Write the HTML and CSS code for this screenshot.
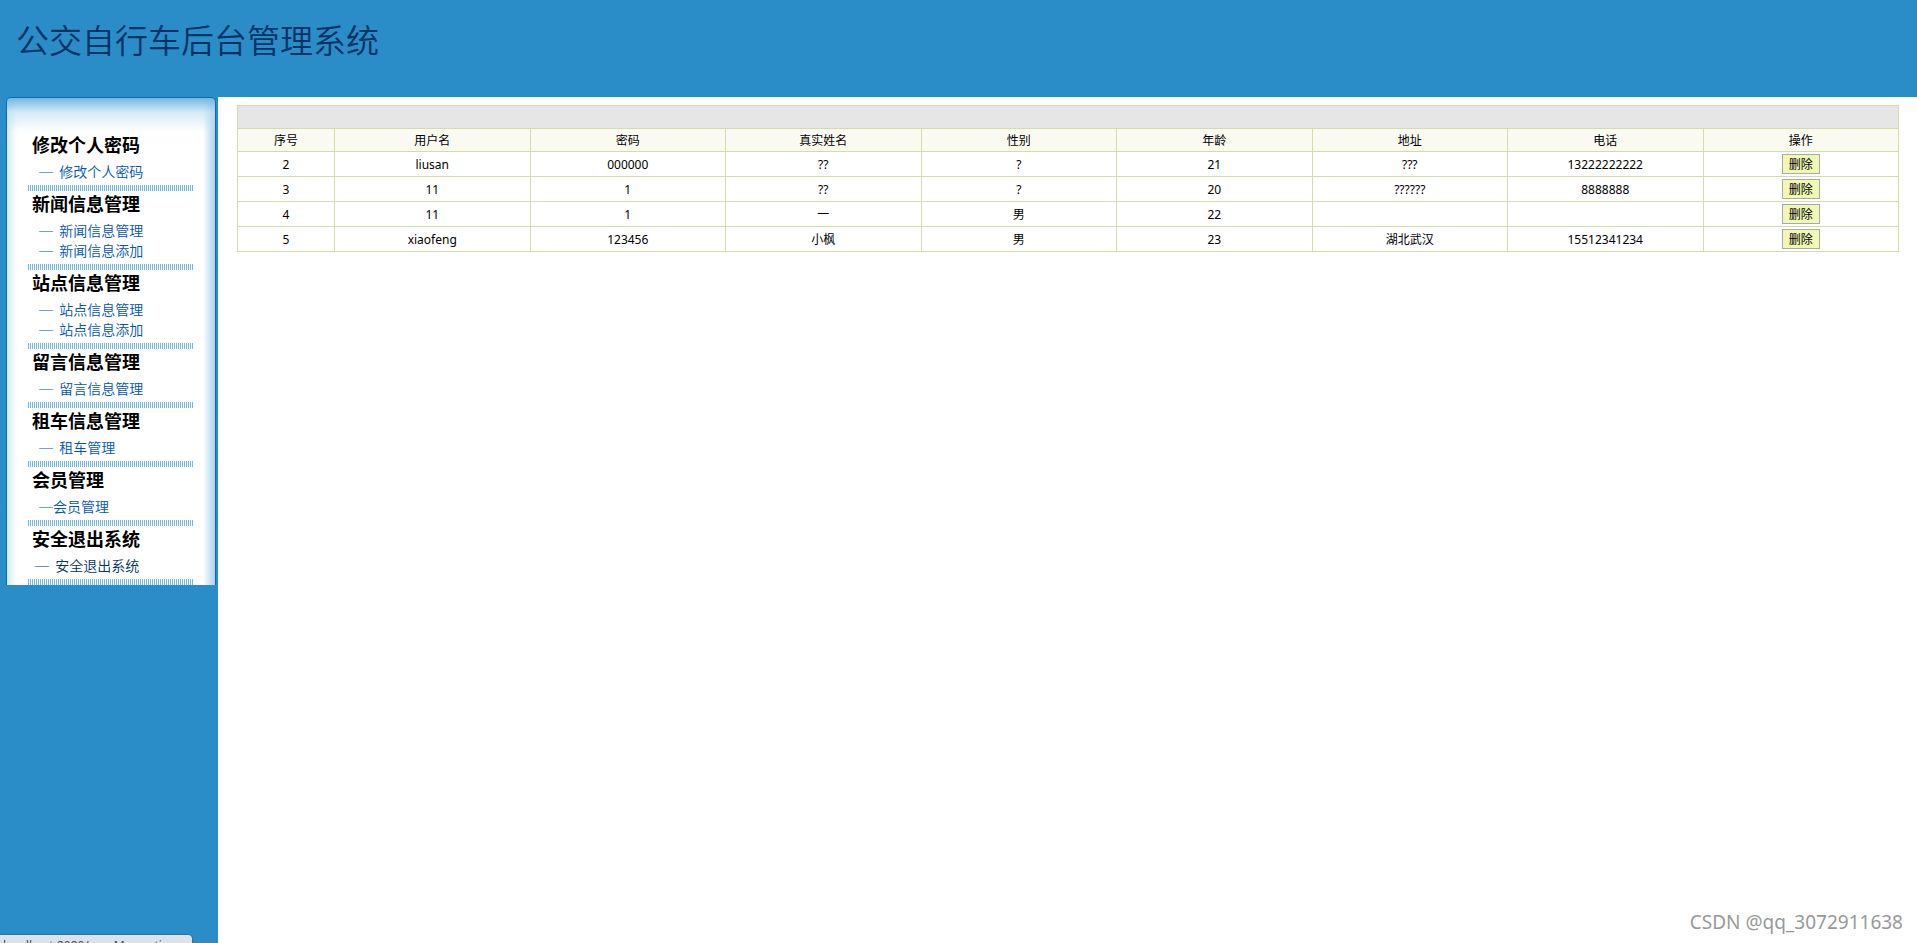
FILE: index.html
```html
<!DOCTYPE html>
<html lang="zh-CN">
<head>
  <meta charset="UTF-8">
  <meta name="viewport" content="width=device-width, initial-scale=1.0">
  <title>公交自行车后台管理系统</title>
  <link rel="stylesheet" href="styles.css">
</head>
<body>
  <header class="top">
    <h1>公交自行车后台管理系统</h1>
  </header>

  <div class="wrap">
    <!-- left menu -->
    <aside class="left">
      <nav class="menu">
        <div class="group">
          <h2>修改个人密码</h2>
          <a href="#">─&nbsp;&nbsp;修改个人密码</a>
        </div>
        <div class="group">
          <h2>新闻信息管理</h2>
          <a href="#">─&nbsp;&nbsp;新闻信息管理</a>
          <a href="#">─&nbsp;&nbsp;新闻信息添加</a>
        </div>
        <div class="group">
          <h2>站点信息管理</h2>
          <a href="#">─&nbsp;&nbsp;站点信息管理</a>
          <a href="#">─&nbsp;&nbsp;站点信息添加</a>
        </div>
        <div class="group">
          <h2>留言信息管理</h2>
          <a href="#">─&nbsp;&nbsp;留言信息管理</a>
        </div>
        <div class="group">
          <h2>租车信息管理</h2>
          <a href="#">─&nbsp;&nbsp;租车管理</a>
        </div>
        <div class="group">
          <h2>会员管理</h2>
          <a href="#">─会员管理</a>
        </div>
        <div class="group">
          <h2>安全退出系统</h2>
          <a href="#" class="exit">─&nbsp;&nbsp;安全退出系统</a>
        </div>
      </nav>
    </aside>

    <!-- user list -->
    <main class="main">
      <table class="list">
        <colgroup>
          <col class="no">
          <col span="8">
        </colgroup>
        <thead>
          <tr class="bar"><td colspan="9"></td></tr>
          <tr class="head">
            <th>序号</th>
            <th>用户名</th>
            <th>密码</th>
            <th>真实姓名</th>
            <th>性别</th>
            <th>年龄</th>
            <th>地址</th>
            <th>电话</th>
            <th>操作</th>
          </tr>
        </thead>
        <tbody>
          <tr>
            <td>2</td><td>liusan</td><td>000000</td><td>??</td><td>?</td><td>21</td><td>???</td><td>13222222222</td>
            <td><button type="button">删除</button></td>
          </tr>
          <tr>
            <td>3</td><td>11</td><td>1</td><td>??</td><td>?</td><td>20</td><td>??????</td><td>8888888</td>
            <td><button type="button">删除</button></td>
          </tr>
          <tr>
            <td>4</td><td>11</td><td>1</td><td>一</td><td>男</td><td>22</td><td></td><td></td>
            <td><button type="button">删除</button></td>
          </tr>
          <tr>
            <td>5</td><td>xiaofeng</td><td>123456</td><td>小枫</td><td>男</td><td>23</td><td>湖北武汉</td><td>15512341234</td>
            <td><button type="button">删除</button></td>
          </tr>
        </tbody>
      </table>
    </main>
  </div>

  <div class="status">localhost:8080/userMan.action</div>
  <div class="mark">CSDN @qq_3072911638</div>
</body>
</html>
```
FILE: styles.css
```css
* {
  box-sizing: border-box;
}

body {
  margin: 0;
  height: 100vh;
  display: flex;
  flex-direction: column;
  overflow: hidden;
  background: #2a8dc8;
  font-family: "Noto Sans", "Noto Sans CJK SC", sans-serif;
  font-size: 12px;
  color: #000;
}

.top {
  height: 97px;
  padding: 16px;
}

.top h1 {
  margin: 0;
  font-family: "Noto Sans CJK SC", sans-serif;
  font-size: 33px;
  line-height: 46px;
  font-weight: 350;
  color: #003366;
}

.wrap {
  flex: 1;
  display: flex;
}

.left {
  width: 218px;
  padding: 0 2px 0 6px;
}

/* menu panel */
.menu {
  padding: 34px 22px 0 21px;
  border: 1px solid #0a6ba5;
  border-bottom: none;
  border-radius: 5px 5px 0 0;
  background:
    linear-gradient(to bottom, #72b8e2, rgba(184, 220, 241, 0.6) 14px, rgba(255, 255, 255, 0) 34px),
    linear-gradient(to right, #d3eaf6, rgba(255, 255, 255, 0) 10px),
    linear-gradient(to left, #a5d3ed, rgba(255, 255, 255, 0) 12px),
    #fff;
  font-family: "Noto Sans CJK SC", sans-serif;
}

.group h2 {
  margin: 0 0 5px 4px;
  font-size: 18px;
  line-height: 24px;
  font-weight: bold;
}

.group a {
  display: block;
  padding-left: 11px;
  font-size: 14px;
  line-height: 20px;
  font-weight: 350;
  color: #0055b8;
  text-decoration: none;
}

.group a.exit {
  padding-left: 7px;
  color: #003366;
}

/* striped separator */
.group::after {
  content: "";
  display: block;
  height: 6px;
  margin-top: 4px;
  background: repeating-linear-gradient(to right, #72b8e2 0, #72b8e2 1px, #fff 1px, #fff 2px);
}

.main {
  flex: 1;
  padding: 8px 18px 0 19px;
  background: #fff;
}

.list {
  width: 100%;
  table-layout: fixed;
  border-collapse: collapse;
  text-align: center;
  line-height: 16px;
}

.list .no {
  width: 97px;
}

.list td,
.list th {
  height: 25px;
  padding: 2px 0 0;
  border: 1px solid #d3dcab;
  font-weight: normal;
}

.list td:last-child {
  padding: 0;
}

.list .bar td {
  height: 23px;
  background: #e6e6e6;
}

.list .head th {
  height: 23px;
  background: #fafaf1;
}

.list button {
  display: block;
  width: 38px;
  height: 20px;
  margin: 0 auto;
  padding: 1px 0 0;
  border: 1px solid #a9a9a9;
  background: #f1f8b3;
  font-family: inherit;
  font-size: 12px;
  line-height: 16px;
  color: #000;
}

/* link preview, runs off the bottom edge */
.status {
  position: absolute;
  left: 0;
  bottom: -14px;
  width: 192px;
  height: 22px;
  padding-left: 3px;
  border-radius: 0 4px 0 0;
  background: #dee1e6;
  box-shadow: 0 0 2px rgba(0, 0, 0, 0.5);
  font-size: 12px;
  line-height: 22px;
  color: #4a4d51;
}

.mark {
  position: absolute;
  right: 14px;
  bottom: 8px;
  font-size: 19px;
  line-height: 26px;
  color: #999;
}
```
